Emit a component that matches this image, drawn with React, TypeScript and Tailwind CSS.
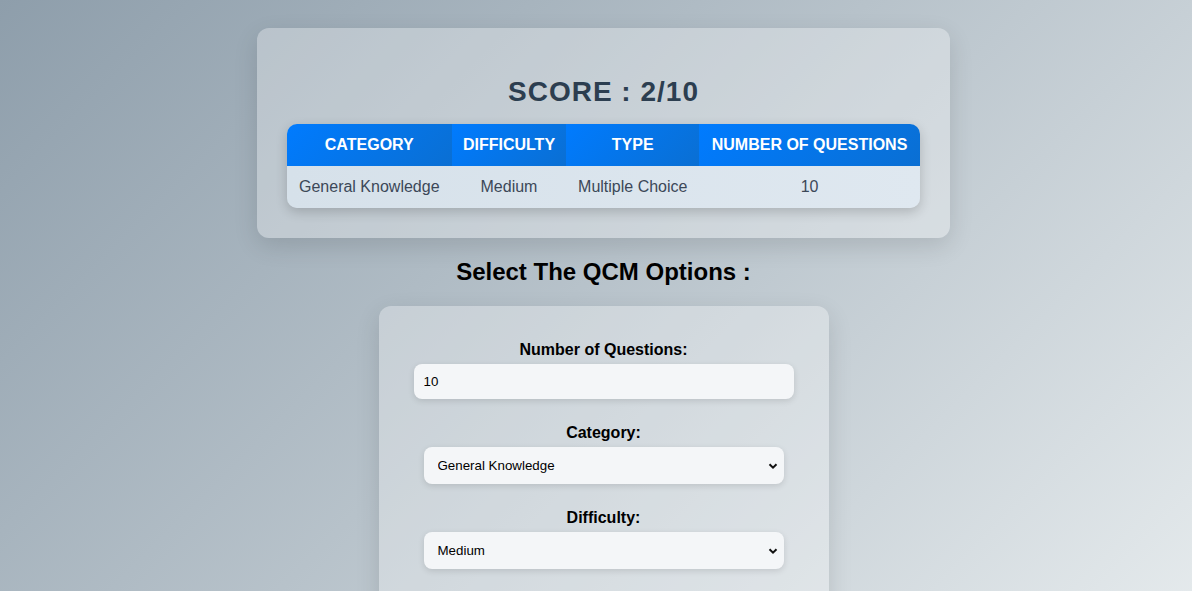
import { useState } from "react"

const info = [
  ["Category", "General Knowledge"],
  ["Difficulty", "Medium"],
  ["Type", "Multiple Choice"],
  ["Number of Questions", "10"],
] as const

function Chevron() {
  return (
    <svg className="pointer-events-none absolute right-[6px] top-1/2 -translate-y-1/2" width="10" height="10" viewBox="0 0 10 10">
      <path d="M1.5 3.2 L5 6.7 L8.5 3.2" fill="none" stroke="#111" strokeWidth="2" />
    </svg>
  )
}

function Select({ value, options, onChange }: { value: string; options: string[]; onChange: (v: string) => void }) {
  return (
    <div className="relative w-[360px]">
      <select
        value={value}
        onChange={e => onChange(e.target.value)}
        className="w-full h-[37px] appearance-none rounded-lg bg-[#f4f6f8] pl-[14px] pr-6 text-[13.33px] text-black shadow-[0_2px_6px_rgba(0,0,0,0.12)] outline-none"
      >
        {options.map(o => <option key={o}>{o}</option>)}
      </select>
      <Chevron />
    </div>
  )
}

export default function App() {
  const [amount, setAmount] = useState("10")
  const [category, setCategory] = useState("General Knowledge")
  const [difficulty, setDifficulty] = useState("Medium")
  const [type, setType] = useState("Multiple Choice")

  return (
    <div className="min-h-screen bg-linear-135 from-[#8e9eab] to-[#eef2f3] font-['Liberation_Sans',Arial,sans-serif] flex flex-col items-center pt-[28px] pb-10 pl-[15px]">
      <div className="w-[693px] rounded-xl bg-white/30 px-[30px] pt-[48px] pb-[30px] shadow-[0_8px_24px_rgba(0,0,0,0.12)]">
        <h2 className="text-center text-[28px] leading-8 font-bold tracking-[1px] text-[#2c3e50] mb-4">SCORE : 2/10</h2>
        <div className="rounded-[10px] overflow-hidden shadow-[0_4px_12px_rgba(0,0,0,0.18)]">
          <table className="w-full border-collapse text-center text-base">
            <thead>
              <tr>
                {info.map(([h]) => (
                  <th key={h} className="px-[10px] py-3 leading-[18px] font-bold uppercase whitespace-nowrap text-white bg-linear-135 from-[#007bff] to-[#0a6fd3]">
                    {h}
                  </th>
                ))}
              </tr>
            </thead>
            <tbody>
              <tr className="bg-linear-to-r from-[#d6e1ea] to-[#dfe8f0]">
                {info.map(([h, v]) => (
                  <td key={h} className="px-[10px] py-3 leading-[18px] text-[#3c4858] whitespace-nowrap">{v}</td>
                ))}
              </tr>
            </tbody>
          </table>
        </div>
      </div>

      <h2 className="mt-5 text-center text-2xl leading-7 font-bold text-black">Select The QCM Options :</h2>

      <div className="mt-5 w-[450px] rounded-xl bg-white/30 px-[35px] pt-[35px] pb-[35px] shadow-[0_8px_24px_rgba(0,0,0,0.12)] flex flex-col items-center">
        <label className="text-base leading-[18px] font-bold text-black">Number of Questions:</label>
        <input
          type="number"
          value={amount}
          onChange={e => setAmount(e.target.value)}
          className="mt-[5px] w-[380px] h-[35px] rounded-lg bg-[#f4f6f8] px-[10px] text-[13.33px] text-black shadow-[0_2px_6px_rgba(0,0,0,0.12)] outline-none"
        />

        <label className="mt-[25px] text-base leading-[18px] font-bold text-black">Category:</label>
        <div className="mt-[5px]">
          <Select value={category} onChange={setCategory} options={["General Knowledge", "Science & Nature", "Sports", "History"]} />
        </div>

        <label className="mt-[25px] text-base leading-[18px] font-bold text-black">Difficulty:</label>
        <div className="mt-[5px]">
          <Select value={difficulty} onChange={setDifficulty} options={["Easy", "Medium", "Hard"]} />
        </div>

        <label className="mt-[25px] text-base leading-[18px] font-bold text-black">Type:</label>
        <div className="mt-[5px]">
          <Select value={type} onChange={setType} options={["Multiple Choice", "True / False"]} />
        </div>

        <button className="mt-6 h-10 px-6 rounded-lg bg-[#007bff] text-white font-bold">Start</button>
      </div>
    </div>
  )
}
